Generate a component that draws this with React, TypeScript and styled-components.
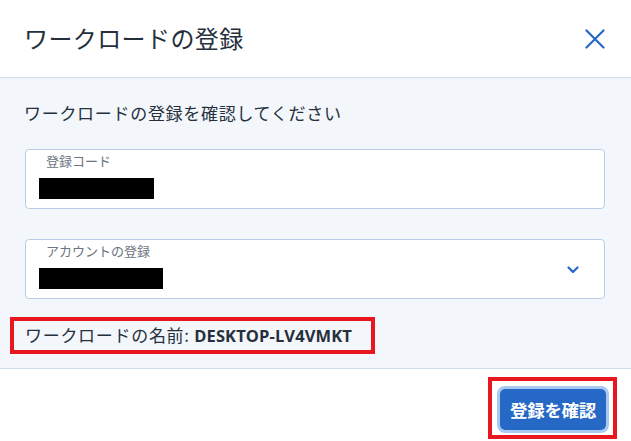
import React from "react";
import styled, { createGlobalStyle } from "styled-components";

const GlobalStyles = createGlobalStyle`
  html, body {
    margin: 0;
    padding: 0;
    background: #ffffff;
  }
  body {
    font-family: "Noto Sans CJK JP", "Open Sans", sans-serif;
  }
`;

const colors = {
  text: "#26303d",
  muted: "#6b7480",
  blue: "#2668c5",
  ring: "#a9c9f1",
  bodyBg: "#f3f6fb",
  border: "#cfdcef",
  fieldBorder: "#b9cde9",
  annotate: "#e8161f"
};

const jp = `"Noto Sans CJK JP", "Open Sans", sans-serif`;
const latin = `"Open Sans", "Noto Sans CJK JP", sans-serif`;

const CloseIcon = () => (
  <svg width="20" height="20" viewBox="0 0 20 20" fill="none">
    <path
      d="M1.5 1.5 L18.5 18.5 M18.5 1.5 L1.5 18.5"
      stroke={colors.blue}
      strokeWidth="2.2"
      strokeLinecap="round"
    />
  </svg>
);

const ChevronIcon = () => (
  <svg width="12" height="8" viewBox="0 0 12 8" fill="none">
    <path
      d="M1.5 1.5 L6 6 L10.5 1.5"
      stroke={colors.blue}
      strokeWidth="2.2"
      strokeLinecap="round"
      strokeLinejoin="round"
    />
  </svg>
);

const App = () => (
  <>
    <GlobalStyles />
    <Dialog>
      <Header>
        <Title>ワークロードの登録</Title>
        <CloseButton aria-label="閉じる">
          <CloseIcon />
        </CloseButton>
      </Header>

      <Body>
        <Intro>ワークロードの登録を確認してください</Intro>

        <Field>
          <FieldContent>
            <FieldLabel>登録コード</FieldLabel>
            <Redacted width={115} />
          </FieldContent>
        </Field>

        <Field withGap>
          <FieldContent>
            <FieldLabel>アカウントの登録</FieldLabel>
            <Redacted width={124} />
          </FieldContent>
          <SelectArrow>
            <ChevronIcon />
          </SelectArrow>
        </Field>

        <Annotated>
          <NameLine>
            ワークロードの名前: <NameValue>DESKTOP-LV4VMKT</NameValue>
          </NameLine>
        </Annotated>
      </Body>

      <Footer>
        <ButtonHighlight>
          <ButtonRing>
            <PrimaryButton>登録を確認</PrimaryButton>
          </ButtonRing>
        </ButtonHighlight>
      </Footer>
    </Dialog>
  </>
);
export default App;

const Dialog = styled.div`
  width: 631px;
  height: 441px;
  display: flex;
  flex-direction: column;
  background: #ffffff;
  overflow: hidden;
`;

const Header = styled.header`
  box-sizing: border-box;
  height: 78px;
  flex-shrink: 0;
  display: flex;
  align-items: center;
  justify-content: space-between;
  padding: 0 26px 0 24px;
  border-bottom: 1px solid ${colors.border};
`;

const Title = styled.h1`
  margin: 0 0 2px 0;
  font-family: ${jp};
  font-size: 24px;
  font-weight: 400;
  color: ${colors.text};
  letter-spacing: 0.4px;
`;

const CloseButton = styled.button`
  display: flex;
  padding: 0;
  border: none;
  background: none;
  margin-top: 1px;
  cursor: pointer;
`;

const Body = styled.main`
  box-sizing: border-box;
  flex: 1;
  display: flex;
  flex-direction: column;
  align-items: flex-start;
  background: ${colors.bodyBg};
  padding: 23px 26px 0 10px;
  border-bottom: 1px solid ${colors.border};
`;

const Intro = styled.p`
  margin: 0 0 0 14px;
  font-family: ${jp};
  font-size: 17px;
  line-height: 24px;
  color: ${colors.text};
  letter-spacing: 0.7px;
`;

const Field = styled.div<{ withGap?: boolean }>`
  box-sizing: border-box;
  align-self: stretch;
  margin: ${(p) => (p.withGap ? "30px" : "24px")} 0 0 15px;
  height: 60px;
  display: flex;
  align-items: center;
  background: #ffffff;
  border: 1px solid ${colors.fieldBorder};
  border-radius: 4px;
`;

const FieldContent = styled.div`
  flex: 1;
  display: flex;
  flex-direction: column;
  align-items: flex-start;
  padding: 2px 0 0 13px;
  align-self: stretch;
`;

const FieldLabel = styled.span`
  margin-left: 7px;
  font-family: ${jp};
  font-size: 13px;
  line-height: 18px;
  color: ${colors.muted};
`;

const Redacted = styled.span<{ width: number }>`
  display: block;
  margin-top: 8px;
  width: ${(p) => p.width}px;
  height: 21px;
  background: #000000;
`;

const SelectArrow = styled.span`
  display: flex;
  margin: 0 25px 0 0;
  padding-top: 2px;
`;

const Annotated = styled.div`
  margin-top: 18px;
  border: 4px solid ${colors.annotate};
  padding: 2px 19px 2px 11px;
`;

const NameLine = styled.p`
  margin: 0;
  font-family: ${jp};
  font-size: 17px;
  line-height: 24px;
  color: ${colors.text};
  letter-spacing: 0.7px;
  white-space: nowrap;
`;

const NameValue = styled.span`
  font-family: ${latin};
  font-weight: 700;
  font-size: 16.5px;
  letter-spacing: 0.1px;
`;

const Footer = styled.footer`
  box-sizing: border-box;
  height: 72px;
  flex-shrink: 0;
  display: flex;
  align-items: flex-end;
  justify-content: flex-end;
  padding: 0 14px 2px 0;
`;

const ButtonHighlight = styled.div`
  border: 4px solid ${colors.annotate};
  padding: 5px 4px 2px 5px;
`;

const ButtonRing = styled.div`
  border: 3px solid ${colors.ring};
  border-radius: 8px;
  display: flex;
`;

const PrimaryButton = styled.button`
  height: 41px;
  padding: 0 10px;
  border: none;
  border-radius: 5px;
  background: ${colors.blue};
  color: #ffffff;
  font-family: ${jp};
  font-size: 17.5px;
  font-weight: 700;
  letter-spacing: -0.3px;
  cursor: pointer;
`;
